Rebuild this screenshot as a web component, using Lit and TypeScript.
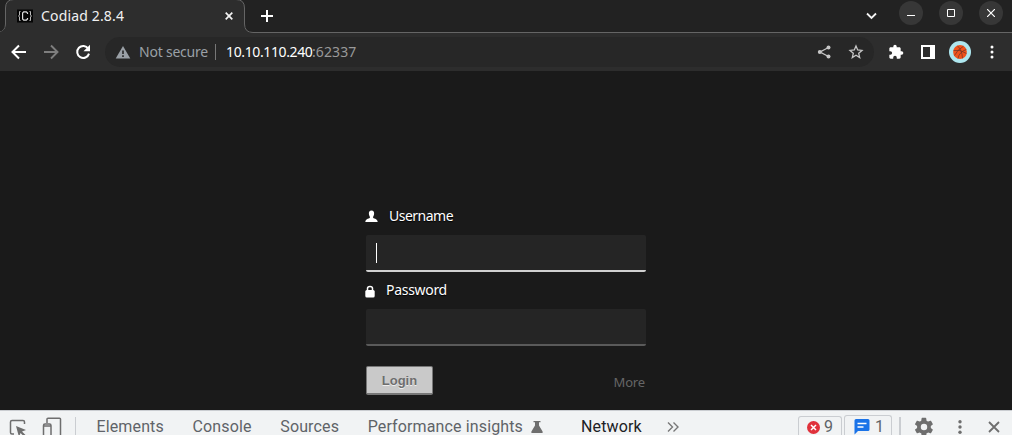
import { LitElement, html, css } from "lit";
import { customElement, property } from "lit/decorators.js";

@customElement("browser-tabs")
class BrowserTabs extends LitElement {
  static styles = css`
    :host { display: grid; height: 33px; background: #222; overflow: hidden; color: #f1f1f1; }
    svg { display: block; flex: none; }
    .shape, .row { grid-area: 1 / 1; }
    .row { display: flex; align-items: center; height: 32px; padding-left: 17px; }
    .title { font: 14px/20px "Noto Sans", sans-serif; width: 177px; margin: 0 7px 0 8px; white-space: nowrap; letter-spacing: 0.16px; }
    .plus { margin-left: 25px; }
    .chev { margin-left: auto; margin-right: 22px; }
    .win { width: 24px; height: 24px; border-radius: 50%; background: #373737; display: flex; align-items: center; justify-content: center; margin: -6px 16px 0 0; flex: none; }
    .win:last-child { margin-right: 9px; }
  `;
  render() {
    return html`
      <svg class="shape" width="1012" height="33">
        <path d="M-2 32.5Q5.500 31.500 5.500 24V8Q5.500 -.5 14 -.5H236Q244.500 -.5 244.500 8V24Q244.500 32.500 253 32.500H1014V40H-2Z" fill="#2d2d2d" stroke="#656565"/>
        <path d="M0 33V32.300Q5 30 6 26H244Q244 32 251 33Z" fill="#2d2d2d"/>
      </svg>
      <div class="row">
        <svg width="16" height="14" viewBox="0 0 16 14">
          <path d="M0 .5H16V13.500H0Z" fill="#050505"/>
          <path d="M3.500 2.500H2.500V6L1.500 7L2.500 8V11.500H3.500M12.500 2.500H13.500V6L14.500 7L13.500 8V11.500H12.500" fill="none" stroke="#bbb"/>
          <path d="M10.500 5V4L9.300 2.800H6.700L5.600 4V10L6.700 11.200H9.300L10.500 10V9" fill="none" stroke="#ddd" stroke-width="1.200"/>
        </svg>
        <span class="title">Codiad 2.8.4</span>
        <svg width="8" height="8" viewBox="0 0 8 8"><path d="M.7 .7L7.300 7.300M7.300 .7L.7 7.300" stroke="#f3f3f3" stroke-width="1.700"/></svg>
        <svg class="plus" width="18" height="12" viewBox="0 0 18 12"><path d="M9 0V12M3 6H15" stroke="#fff" stroke-width="2"/></svg>
        <svg class="chev" width="11" height="8" viewBox="0 0 11 8"><path d="M1 1.500L5.500 6L10 1.500" fill="none" stroke="#f3f3f3" stroke-width="1.800"/></svg>
        <span class="win"><svg width="10" height="10"><path d="M1 7.500H9" stroke="#fff"/></svg></span>
        <span class="win"><svg width="8" height="8"><path d="M.5 .5H7.500V7.500H.5Z" fill="none" stroke="#fff"/></svg></span>
        <span class="win"><svg width="8" height="8"><path d="M0 0L8 8M8 0L0 8" stroke="#fff" stroke-width="1.200"/></svg></span>
      </div>`;
  }
}

@customElement("address-bar")
class AddressBar extends LitElement {
  static styles = css`
    :host { display: flex; align-items: center; height: 38px; background: #2d2d2d; box-sizing: border-box; padding-left: 11px; font: 14px/20px "Noto Sans", sans-serif; }
    svg { display: block; flex: none; }
    .fwd { margin: 0 16px; }
    .field { display: flex; align-items: center; width: 769px; height: 30px; border-radius: 15px; background: #272727; margin-left: 14px; padding: 0 10px; box-sizing: border-box; }
    .ns { width: 68px; color: #9aa0a6; margin-left: 8px; white-space: nowrap; letter-spacing: -0.22px; }
    .bar { width: 1px; height: 16px; background: #777; margin: 0 10px 0 8px; }
    .host { color: #fff; width: 86px; white-space: nowrap; letter-spacing: -0.38px; }
    .port { color: #999; letter-spacing: 0.1px; }
    .share { margin-left: auto; margin-right: 16px; }
    .ext { margin-left: 14px; }
    .side { margin-left: 17px; }
    .ball { margin-left: 14px; }
    .dots { margin-left: 18px; }
  `;
  render() {
    return html`
      <svg width="16" height="16" viewBox="0 0 16 16"><path d="M15 8H2M8 1.500L1.500 8L8 14.500" fill="none" stroke="#fff" stroke-width="2"/></svg>
      <svg class="fwd" width="16" height="16" viewBox="0 0 16 16"><path d="M1 8H14M8 1.500L14.500 8L8 14.500" fill="none" stroke="#7e7e7e" stroke-width="1.900"/></svg>
      <svg width="16" height="16" viewBox="0 0 16 16"><path d="M13.300 4.700A6 6 0 1 0 14 9.600" fill="none" stroke="#fff" stroke-width="2"/><path d="M15 .8V7.300H8.500Z" fill="#fff"/></svg>
      <div class="field">
        <svg width="16" height="16" viewBox="0 0 16 16"><path d="M8 2L15.300 14.500H.7Z" fill="#9aa0a6"/><path d="M8 6.500V10M8 11.300V13" stroke="#272727" stroke-width="1.600"/></svg>
        <span class="ns">Not secure</span><span class="bar"></span>
        <span class="host">10.10.110.240</span><span class="port">:62337</span>
        <svg class="share" width="16" height="16" viewBox="0 0 16 16"><path d="M12.500 3.500L4 8L12.500 12.500" fill="none" stroke="#c7c7c7" stroke-width="1.300"/><g fill="#c7c7c7"><circle cx="12.500" cy="3.500" r="2"/><circle cx="3.800" cy="8" r="2"/><circle cx="12.500" cy="12.500" r="2"/></g></svg>
        <svg width="16" height="16" viewBox="0 0 16 16"><path d="M8 2L9.700 6L14 6.400L10.700 9.300L11.700 13.500L8 11.200L4.300 13.500L5.300 9.300L2 6.400L6.300 6Z" fill="none" stroke="#c7c7c7" stroke-width="1.300"/></svg>
      </div>
      <svg class="ext" width="16" height="16" viewBox="0 0 24 24"><path fill="#fff" d="M20.500 11H19V7c0-1.100-.9-2-2-2h-4V3.500a2.500 2.500 0 0 0-5 0V5H4c-1.100 0-2 .9-2 2v3.800h1.500a2.700 2.700 0 0 1 0 5.400H2V20c0 1.100.9 2 2 2h3.800v-1.500a2.700 2.700 0 0 1 5.400 0V22H17c1.100 0 2-.9 2-2v-4h1.500a2.500 2.500 0 0 0 0-5z"/></svg>
      <svg class="side" width="14" height="14"><path d="M1 1H13V13H1Z" fill="none" stroke="#fff" stroke-width="2"/><path d="M9 0H14V14H9Z" fill="#fff"/></svg>
      <svg class="ball" width="22" height="22" viewBox="0 0 22 22"><circle cx="11" cy="11" r="11" fill="#aee7ef"/><circle cx="11" cy="11" r="6.900" fill="#f0531c"/><path d="M4.500 9.500Q11 8 17.500 12.500M8.500 4.800Q13 9 13.500 17.300M5.500 14.500Q8 9 14.500 5.200M9 17.500Q10 11 17.300 8.500" fill="none" stroke="#6b3428" stroke-width=".7"/></svg>
      <svg class="dots" width="6" height="16"><g fill="#fff"><circle cx="3" cy="3" r="1.500"/><circle cx="3" cy="8" r="1.500"/><circle cx="3" cy="13" r="1.500"/></g></svg>`;
  }
}

@customElement("login-form")
class LoginForm extends LitElement {
  static styles = css`
    :host { display: block; height: 339px; background: #1a1a1a; box-sizing: border-box; padding: 135px 366px 0; font: 14px/20px "Noto Sans", sans-serif; color: #fff; }
    svg { display: block; flex: none; }
    .label { display: flex; height: 20px; align-items: center; text-shadow: 0 1px 1px #000; margin-left: -1px; }
    .u { gap: 11px; letter-spacing: -0.5px; }
    .p { gap: 11px; margin-top: 8px; letter-spacing: -0.3px; }
    .p svg { margin-top: 1px; }
    .input { box-sizing: border-box; height: 37px; margin-top: 9px; border-radius: 2px; background: #252525; border-bottom: 2px solid #5a5a5a; padding: 8px 10px; }
    .focus { border-color: #d0d0d0; }
    .caret { width: 1px; height: 20px; background: #fff; }
    .foot { display: flex; justify-content: space-between; margin-top: 20px; }
    .btn { box-sizing: border-box; width: 67px; height: 29px; border: 1px solid #777; border-bottom-width: 2px; border-radius: 2px; background: #c9c9c9; color: #6d6d6d; font: bold 13px/26px "Liberation Sans", sans-serif; letter-spacing: 0; text-align: center; text-shadow: 0 1px #eee; padding: 1px 0 0; }
    .more { font-size: 13px; color: #666; margin: 6px 1px 0 0; letter-spacing: -0.15px; }
  `;
  render() {
    return html`
      <div class="label u"><svg width="13" height="14" viewBox="0 0 13 14"><path d="M6.500 1.500C4.500 1.500 3.700 3 3.900 5C4 6.500 5 7.500 5 8.300C5 9.800 .5 9.500 .3 13H12.700C12.500 9.500 8 9.800 8 8.300C8 7.500 9 6.500 9.100 5C9.300 3 8.500 1.500 6.500 1.500Z" fill="#fff"/></svg><span>Username</span></div>
      <div class="input focus"><div class="caret"></div></div>
      <div class="label p"><svg width="10" height="14" viewBox="0 0 10 14"><path d="M2.500 7V4.500Q2.500 2.500 5 2.500Q7.500 2.500 7.500 4.500V7" fill="none" stroke="#fff" stroke-width="1.500"/><rect x=".3" y="6" width="9.400" height="7.500" rx="1.500" fill="#fff"/></svg><span>Password</span></div>
      <div class="input"></div>
      <div class="foot"><button class="btn">Login</button><span class="more">More</span></div>`;
  }
}

@customElement("dev-tools")
class DevTools extends LitElement {
  @property({ attribute: false }) tabs = ["Elements", "Console", "Sources"];
  static styles = css`
    :host { display: flex; height: 25px; overflow: hidden; background: #f1f3f4; border-top: 1px solid #cacdd1; box-sizing: border-box; padding-left: 9px; font: 16px/18px Roboto, sans-serif; color: #5f6368; }
    svg { display: block; flex: none; }
    .pick { margin-top: 8px; }
    .device { margin: 6px 0 0 15px; }
    .sep { width: 1px; height: 18px; background: #cacdd1; margin: 6px 20.500px 0 13px; flex: none; }
    .tab { margin: 7px 28.700px 0 0; white-space: nowrap; letter-spacing: .13px; }
    .tab:first-of-type { margin-left: 0; }
    .perf { margin-right: 8px; }
    .flask { margin-top: 9px; }
    .net { color: #202124; margin-left: 38px; margin-right: 25px; }
    .more { margin-top: 11px; }
    .badge { display: flex; box-sizing: border-box; height: 22px; border: 1px solid #cacdd1; border-bottom: 0; border-radius: 3px 3px 0 0; flex: none; line-height: 17px; }
    .err { width: 44px; height: 19px; margin: 5px 2px 0 auto; padding: 2px 0 0 8px; gap: 4px; line-height: 16px; }
    .msg { width: 48px; height: 20px; margin-top: 4px; padding: 2px 0 0 9px; gap: 5px; }
    .err svg { margin-top: 2px; }
    .msg svg { margin-top: 1px; }
    .sep2 { width: 2px; background: #cacdd1; height: 20px; margin: 6px 12px 0 7px; flex: none; }
    .gear { margin-top: 5px; }
    .dots { margin: 8px 26px 0 23px; }
    .close { margin: 10px 12px 0 0; }
  `;
  render() {
    return html`
      <svg class="pick" width="18" height="20" viewBox="0 0 18 20"><path d="M5 15H3Q1.500 15 1.500 13.500V3Q1.500 1.500 3 1.500H14Q15.500 1.500 15.500 3V5" fill="none" stroke="#6e6e6e" stroke-width="1.500"/><path d="M7 7L17 11L13 12.500L17.500 17L16 18.500L11.500 14L10 18Z" fill="#6e6e6e"/></svg>
      <svg class="device" width="20" height="22" viewBox="0 0 20 22"><path d="M5 6V2Q5 1.200 6 1.200H17.500Q18.500 1.200 18.500 2V22M1.500 22V8.500Q1.500 7 3 7H7.500Q9 7 9 8.500V22M1 9H9" fill="none" stroke="#6e6e6e" stroke-width="1.500"/></svg>
      <span class="sep"></span>
      ${this.tabs.map((t) => html`<span class="tab">${t}</span>`)}
      <span class="tab perf">Performance insights</span>
      <svg class="flask" width="12" height="14" viewBox="0 0 12 14"><path d="M2.500 1H9.500V2.300H8V5.500L11.600 11.500V13H.4V11.500L4 5.500V2.300H2.500Z" fill="#6e6e6e"/></svg>
      <span class="tab net">Network</span>
      <svg class="more" width="12" height="10" viewBox="0 0 12 10"><path d="M1 .5L5.500 5L1 9.500M6.500 .5L11 5L6.500 9.500" fill="none" stroke="#777" stroke-width="1.400"/></svg>
      <span class="badge err"><svg width="13" height="13" viewBox="0 0 13 13"><circle cx="6.500" cy="6.500" r="6.500" fill="#e0313b"/><path d="M4 4L9 9M9 4L4 9" stroke="#fff" stroke-width="1.500"/></svg>9</span>
      <span class="badge msg"><svg width="16" height="16" viewBox="0 0 16 16"><path d="M2 0H14Q15.500 0 15.500 1.500V10.500Q15.500 12 14 12H4L.5 15.500V1.500Q.5 0 2 0Z" fill="#1a73e8"/><path d="M3.500 4.500H12.500M3.500 8H9.500" stroke="#fff" stroke-width="1.300"/></svg>1</span>
      <span class="sep2"></span>
      <svg class="gear" width="22" height="22" viewBox="0 0 24 24"><path fill="#6e6e6e" d="M19.400 13a7.500 7.500 0 0 0 0-2l2.100-1.600c.2-.2.300-.4.100-.7l-2-3.400c-.1-.2-.4-.3-.6-.2l-2.500 1a7.300 7.300 0 0 0-1.700-1L14.400 2.400a.5.500 0 0 0-.5-.4h-4a.5.500 0 0 0-.5.400L9 5.100a8 8 0 0 0-1.700 1l-2.500-1c-.2-.1-.5 0-.6.200l-2 3.400c-.1.300-.1.500.1.700L4.500 11a7.500 7.500 0 0 0 0 2l-2.200 1.600c-.2.200-.2.500-.1.700l2 3.400c.1.200.4.300.6.200l2.500-1a7.300 7.300 0 0 0 1.700 1l.4 2.700c0 .2.200.4.500.4h4c.2 0 .5-.2.500-.4l.4-2.700a8 8 0 0 0 1.700-1l2.500 1c.2.100.5 0 .6-.2l2-3.400c.1-.2.100-.5-.1-.7zM12 15.500a3.500 3.500 0 1 1 0-7 3.500 3.500 0 0 1 0 7z"/></svg>
      <svg class="dots" width="4" height="16"><g fill="#6e6e6e"><circle cx="2" cy="2.800" r="1.700"/><circle cx="2" cy="8" r="1.700"/><circle cx="2" cy="13.300" r="1.700"/></g></svg>
      <svg class="close" width="12" height="12" viewBox="0 0 12 12"><path d="M1 1L11 11M11 1L1 11" stroke="#6e6e6e" stroke-width="1.800"/></svg>`;
  }
}

@customElement("app-root")
class AppRoot extends LitElement {
  static styles = css`:host { display: block; width: 1012px; height: 435px; overflow: hidden; background: #1a1a1a; }`;
  render() {
    return html`<browser-tabs></browser-tabs><address-bar></address-bar><login-form></login-form><dev-tools></dev-tools>`;
  }
}
